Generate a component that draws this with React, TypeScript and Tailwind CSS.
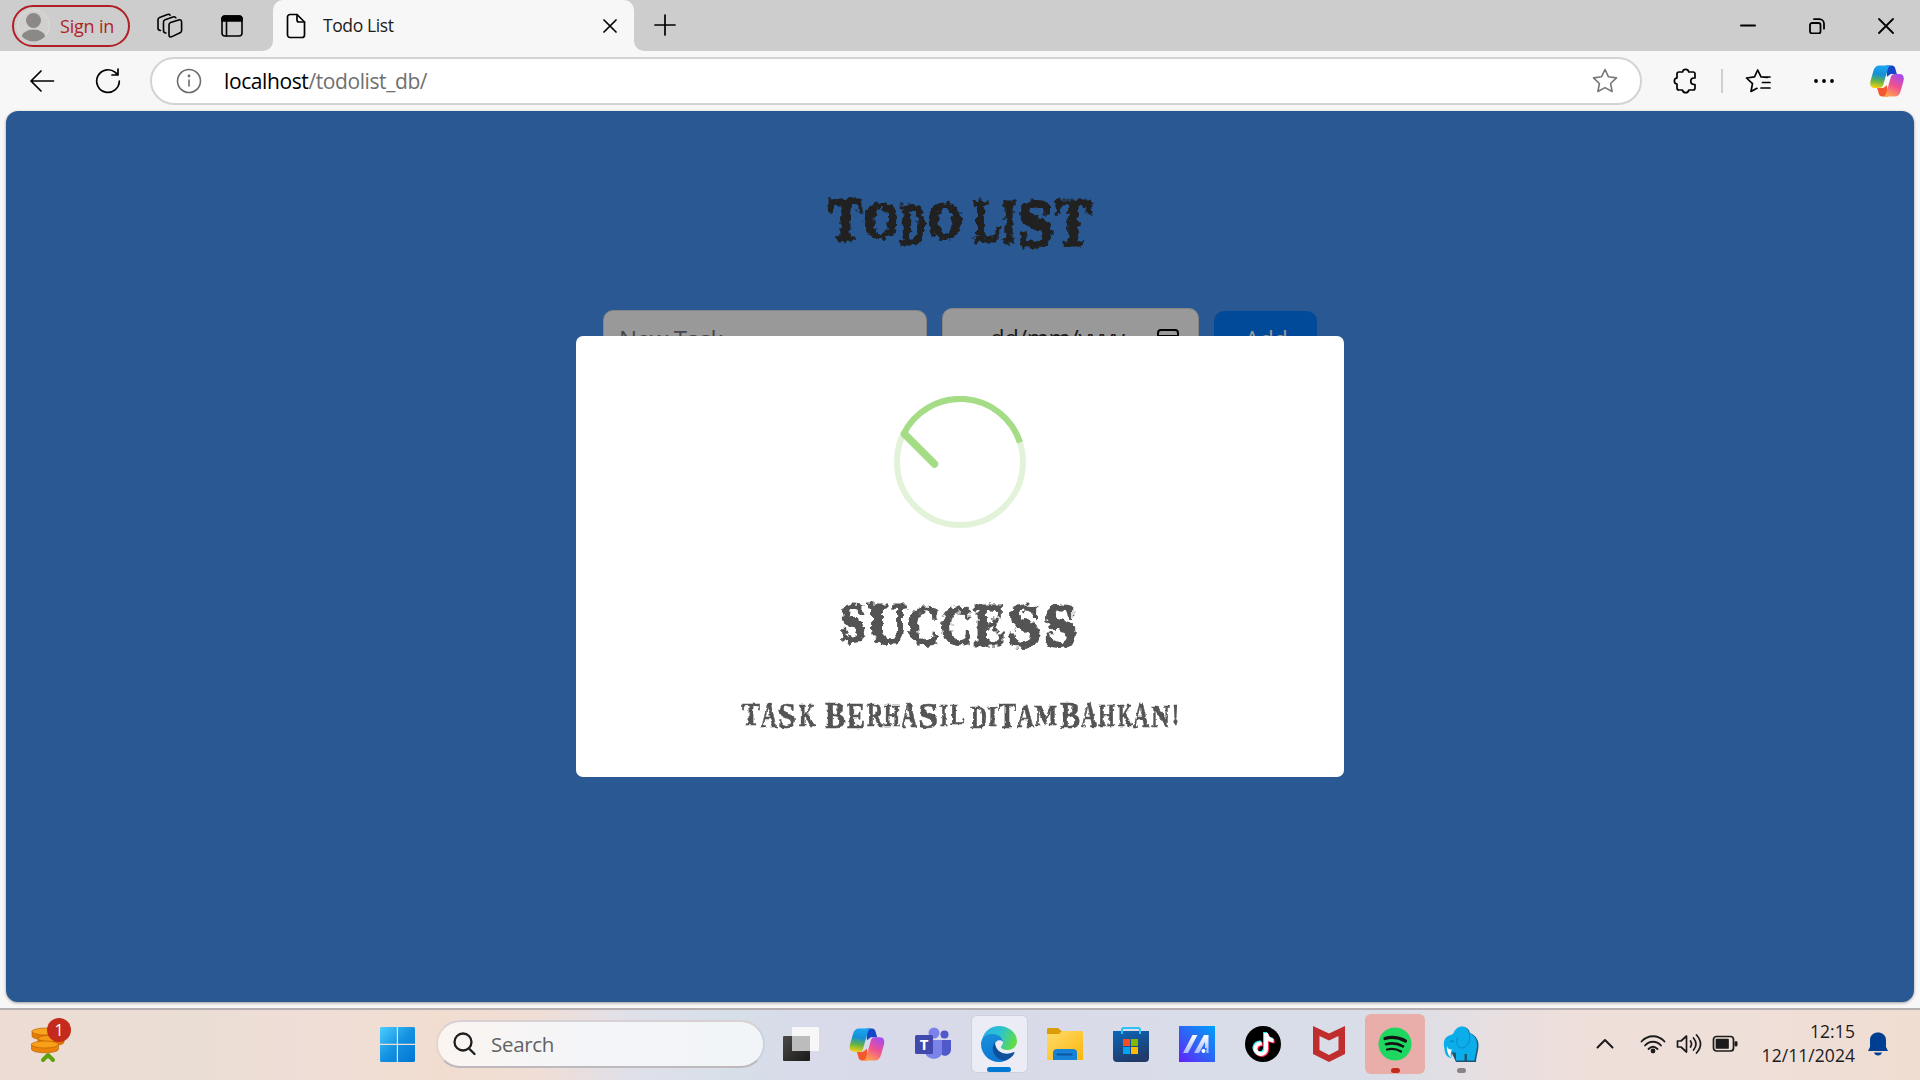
import React from "react";
import { FaTiktok } from "react-icons/fa";

type Glyph = [string, number, number, number, number];

const TITLE: Glyph[] = [
  ["T", 829, 862, 200, 240], ["O", 864, 898, 204, 237], ["D", 900, 926, 206, 244], ["O", 928, 962, 204, 237],
  [" ", 963, 973, 203, 237],
  ["L", 974, 1000, 202, 241], ["I", 1002, 1016, 202, 242], ["S", 1018, 1053, 202, 246], ["T", 1056, 1091, 200, 245],
];
const SUCCESS: Glyph[] = [
  ["S", 841, 865, 605, 641], ["U", 868, 907, 605, 643], ["C", 908, 939, 608, 644], ["C", 941, 972, 608, 644],
  ["E", 974, 1005, 606, 645], ["S", 1008, 1041, 605, 646], ["S", 1044, 1077, 605, 646],
];
const MESSAGE: Glyph[] = [
  ["T", 742, 760, 704, 725], ["A", 761, 777, 704, 727], ["S", 778, 796, 704, 728], ["K", 799, 815, 705, 726],
  [" ", 815, 825, 705, 726],
  ["B", 825, 845, 703, 728], ["E", 847, 865, 705, 728], ["R", 867, 883, 704, 726], ["H", 884, 900, 705, 726],
  ["A", 901, 917, 704, 727], ["S", 918, 938, 704, 728], ["I", 940, 948, 705, 726], ["L", 950, 965, 705, 724],
  [" ", 965, 971, 705, 726],
  ["D", 971, 987, 707, 728], ["I", 988, 997, 706, 726], ["T", 998, 1016, 704, 728], ["A", 1017, 1034, 705, 727],
  ["M", 1035, 1057, 706, 725], ["B", 1060, 1080, 703, 728], ["A", 1081, 1097, 704, 727], ["H", 1098, 1115, 705, 726],
  ["K", 1118, 1132, 705, 726], ["A", 1133, 1149, 704, 727], ["N", 1151, 1170, 706, 727], ["!", 1172, 1179, 705, 724],
];

function Spooky({ glyphs, view, id, spike, stroke, className }: { glyphs: Glyph[]; view: [number, number, number, number]; id: string; spike: number; stroke: number; className: string }) {
  return (
    <svg width={view[2]} height={view[3]} viewBox={view.join(" ")} className={className} overflow="visible">
      <filter id={id} x="-5%" y="-20%" width="110%" height="140%" colorInterpolationFilters="sRGB">
        <feTurbulence type="fractalNoise" baseFrequency="0.23" numOctaves="1" seed="7" result="n" />
        <feDisplacementMap in="SourceGraphic" in2="n" scale={spike} xChannelSelector="R" yChannelSelector="G" />
      </filter>
      <text filter={`url(#${id})`} fill="currentColor" stroke="currentColor" strokeWidth={stroke} fontFamily="Liberation Serif, serif" fontWeight="700" xmlSpace="preserve">
        {glyphs.map(([c, x0, x1, y0, y1], i) => (
          <tspan key={i} x={x0} y={y1} fontSize={(y1 - y0) / 0.66} textLength={x1 - x0} lengthAdjust="spacingAndGlyphs">{c}</tspan>
        ))}
      </text>
    </svg>
  );
}

function Copilot({ id, className }: { id: string; className: string }) {
  return (
    <svg viewBox="0 0 36 34" className={className}>
      <defs>
        <linearGradient id={id + "a"} x1="0.5" y1="0" x2="0.35" y2="1"><stop offset="0" stopColor="#1ba5f0" /><stop offset=".4" stopColor="#1590d8" /><stop offset=".7" stopColor="#63b346" /><stop offset="1" stopColor="#f6cf11" /></linearGradient>
        <linearGradient id={id + "b"} x1="0.8" y1="0" x2="0.3" y2="1"><stop offset="0" stopColor="#a24bf2" /><stop offset=".5" stopColor="#ee5093" /><stop offset="1" stopColor="#ffa34b" /></linearGradient>
      </defs>
      <path d="M17 .5h6c2.500 0 3.500 1.500 4 4l1.500 5H22l-4 3z" fill="#1646c8" />
      <path d="M19 33.500h-6c-2.500 0-3.500-1.500-4-4l-1.500-5H14l4-3z" fill="#f4582e" />
      <path d="M10 .5h13c-2.500 0-3.500 1.500-4.200 4L14 21c-.8 2.500-2 3.500-4.500 3.500H5c-4.500 0-5.500-3.500-4.500-7.500L3.500 6.500C4.500 2.500 6.500.5 10 .5z" fill={`url(#${id}a)`} />
      <path d="M26 33.500H13c2.500 0 3.500-1.500 4.200-4L22 13c.8-2.500 2-3.500 4.500-3.500H31c4.500 0 5.500 3.500 4.500 7.500l-3 10.500c-1 4-3 6-6.500 6z" fill={`url(#${id}b)`} />
    </svg>
  );
}

const line = { fill: "none", stroke: "currentColor", strokeLinecap: "round", strokeLinejoin: "round" } as const;

function TabStrip() {
  return (
    <div className="flex h-[51px] items-end bg-[#cdcdcd]">
      <div className="flex h-[51px] w-[273px] items-center">
        <div className="ml-3 flex h-[42px] w-[118px] items-center rounded-full border-2 border-[#b11f24] pl-[3px]">
          <svg width="33" height="33" viewBox="0 0 33 33">
            <clipPath id="avatar"><circle cx="16.500" cy="16.500" r="16" /></clipPath>
            <circle cx="16.500" cy="16.500" r="16" fill="#d2d0ce" stroke="#dedcda" />
            <g clipPath="url(#avatar)" fill="#8c8886"><circle cx="16.500" cy="11.500" r="7.500" /><ellipse cx="16.500" cy="29" rx="12" ry="8.500" /></g>
          </svg>
          <span className="ml-2.5 whitespace-nowrap text-[18px] leading-none tracking-[-0.2px] text-[#b11f24]">Sign in</span>
        </div>
        <svg width="26" height="26" viewBox="0 0 26 26" className="ml-[27px]" {...line} strokeWidth="1.600">
          <path d="M13.600 9.600 21.600 7q3-.8 3 2v8.500q0 1.600-1.500 2.300L15 23.600q-3 1.200-3-1.600V12q0-1.800 1.600-2.400z" />
          <path d="M9 20q-2.500 0-2.500-2.500V9q0-1.700 1.600-2.300L16 4q2.300-.6 2.800.8" />
          <path d="M3.500 17.500Q1 17.500 1 15V6.600Q1 5 2.600 4.400L10.500 1.500q2-.6 2.500.6" />
        </svg>
        <svg width="22" height="22" viewBox="0 0 22 22" className="ml-[38px]" {...line} strokeWidth="1.600">
          <rect x="1" y="1" width="20" height="20" rx="3" /><path d="M1 6V4a3 3 0 0 1 3-3h14a3 3 0 0 1 3 3v2z" fill="currentColor" /><path d="M5.500 6v15" />
        </svg>
      </div>
      <div className="relative flex h-[51px] w-[361px] items-center rounded-t-[10px] bg-[#f7f7f7] pl-[13px]">
        <svg width="10" height="10" className="absolute -left-[10px] bottom-0"><path d="M10 0v10H0A10 10 0 0 0 10 0" fill="#f7f7f7" /></svg>
        <svg width="10" height="10" className="absolute -right-[10px] bottom-0"><path d="M0 0v10h10A10 10 0 0 1 0 0" fill="#f7f7f7" /></svg>
        <svg width="20" height="26" viewBox="0 0 20 26" {...line} strokeWidth="1.700"><path d="M4 1.500h7l7.500 7.500v13a2.500 2.500 0 0 1-2.500 2.500H4A2.500 2.500 0 0 1 1.500 22V4A2.500 2.500 0 0 1 4 1.500z" /><path d="M11 1.500V7a2 2 0 0 0 2 2h5.500" /></svg>
        <span className="ml-[17px] w-[200px] text-[17.500px] tracking-[-0.4px] text-[#1b1b1b]">Todo List</span>
        <svg width="14" height="14" viewBox="0 0 14 14" className="ml-[80px]" {...line} strokeWidth="1.700"><path d="M1 1l12 12M13 1 1 13" /></svg>
      </div>
      <svg width="22" height="22" viewBox="0 0 22 22" className="mb-[15px] ml-5" {...line} strokeWidth="1.700"><path d="M11 1v20M1 11h20" /></svg>
      <div className="ml-auto flex h-[51px] items-center pr-[26px]">
        <svg width="16" height="16" viewBox="0 0 16 16" {...line} strokeWidth="2"><path d="M1 7.500h14" /></svg>
        <svg width="16" height="16" viewBox="0 0 16 16" className="ml-[53px]" {...line} strokeWidth="1.800"><rect x="1" y="5" width="10.500" height="10.500" rx="2" /><path d="M5 1.200h5.500a4.500 4.500 0 0 1 4.500 4.500v5" /></svg>
        <svg width="16" height="16" viewBox="0 0 16 16" className="ml-[53px]" {...line} strokeWidth="1.800"><path d="M1 1l14 14M15 1 1 15" /></svg>
      </div>
    </div>
  );
}

function Toolbar() {
  return (
    <div className="flex h-[60px] items-center bg-[#f7f7f7]">
      <svg width="26" height="24" viewBox="0 0 26 24" className="-mt-px ml-[29px]" {...line} strokeWidth="1.700"><path d="M12 2 2 12l10 10M2 12h22.500" /></svg>
      <svg width="26" height="26" viewBox="0 0 26 26" className="ml-10" {...line} strokeWidth="1.700"><path d="M24.300 13A11.300 11.300 0 1 1 20 4.200L22.500 6.500M23 1v6h-6" /></svg>
      <div className="ml-[29px] flex h-12 w-[1492px] items-center rounded-full border-2 border-[#d3d3d3] bg-white pl-6">
        <svg width="26" height="26" viewBox="0 0 26 26" className="text-[#6c6c6c]" {...line} strokeWidth="1.600"><circle cx="13" cy="13" r="11.500" /><path d="M13 12v6" /><circle cx="13" cy="8" r=".6" /></svg>
        <span className="ml-[22px] mt-[2px] w-[600px] text-[21px] tracking-[-0.4px] text-[#707070]"><span className="text-black">localhost</span>/todolist_db/</span>
        <svg width="26" height="26" viewBox="0 0 26 26" className="ml-auto mr-[22px] text-[#777]" {...line} strokeWidth="1.600"><path d="M13 1.500l3.500 7.300 8 1.100-5.900 5.600 1.500 8-7.100-3.900-7.100 3.900 1.500-8-5.900-5.600 8-1.100z" /></svg>
      </div>
      <svg width="24" height="26" viewBox="0 0 24 26" className="ml-[31px]" {...line} strokeWidth="1.700"><path d="M4 6a2 2 0 0 1 2-2h3.500a3.200 3.200 0 0 1 6.300 0H20a2 2 0 0 1 2 2v4h-1a3.200 3.200 0 0 0 0 6.500h1V20a2 2 0 0 1-2 2h-4.200a3.200 3.200 0 0 1-6.300 0H6a2 2 0 0 1-2-2v-3.800a3.200 3.200 0 0 1 0-6.300z" /></svg>
      <div className="ml-[24px] h-6 w-0.5 bg-[#cfcfcf]" />
      <svg width="26" height="26" viewBox="0 0 26 26" className="ml-[22px]" {...line} strokeWidth="1.700"><path d="M22.500 9.500 16 8.800 12.700 2 9.500 8.800 1.500 10l6 5.600L6 23.500l6-3.200M17 9h8M17.500 14.500H25M16 20h9" /></svg>
      <svg width="20" height="6" viewBox="0 0 20 6" className="ml-[43px]"><circle cx="2" cy="3" r="1.900" /><circle cx="10" cy="3" r="1.900" /><circle cx="18" cy="3" r="1.900" /></svg>
      <Copilot id="c1" className="ml-[36px] h-[32px] w-[34px]" />
    </div>
  );
}

function Page() {
  return (
    <div className="relative flex h-[891px] flex-col items-center overflow-hidden rounded-xl bg-[#295892] shadow-[0_1px_3px_#999]">
      <h1 className="mt-[79px]"><Spooky id="sp1" glyphs={TITLE} view={[820, 190, 280, 65]} spike={9} stroke={3} className="text-[#212121]" /></h1>
      <div className="mt-[53px] flex h-[60px] items-start gap-[15px] text-2xl">
        <div className="mt-[2px] h-[56px] w-[324px] rounded-[10px] border border-[#858585] bg-[#999] pl-[15px] pt-[10px] leading-[36px] tracking-[-0.4px] text-[#45484b]">New Task</div>
        <div className="flex h-[60px] w-[257px] justify-between rounded-[10px] border border-[#858585] bg-[#999] pl-[47px] pr-[19px] pt-[11px] leading-[36px] tracking-[-0.5px] text-[#1b1b1b]">
          dd/mm/yyyy
          <svg width="22" height="22" viewBox="0 0 22 22" className="mt-[9px] text-black" {...line} strokeWidth="2"><rect x="1" y="1" width="20" height="20" rx="3" /><path d="M1 7h20" /></svg>
        </div>
        <div className="mt-[3px] h-[54px] w-[103px] rounded-[10px] bg-[#004a99] pl-px pt-[10px] text-center leading-[36px] tracking-[-0.5px] text-[#999]">Add</div>
      </div>
      <div className="absolute left-[570px] top-[225px] flex h-[441px] w-[768px] flex-col items-center rounded-[7px] bg-white text-[#545454]">
        <svg width="132" height="132" viewBox="894 396 132 132" className="mt-[60px]" fill="none">
          <circle cx="960" cy="462" r="63" stroke="#e2f3da" strokeWidth="6" />
          <path d="M903.500 434.200A63 63 0 0 1 1020 442.500" stroke="#a5dc86" strokeWidth="6" />
          <path d="M904.500 434 934.500 464" stroke="#a5dc86" strokeWidth="7.500" strokeLinecap="round" />
        </svg>
        <h2 className="mt-[67px]"><Spooky id="sp2" glyphs={SUCCESS} view={[835, 595, 250, 60]} spike={9} stroke={2.8} className="" /></h2>
        <div className="mt-[40px]"><Spooky id="sp3" glyphs={MESSAGE} view={[735, 695, 450, 40]} spike={3.5} stroke={0.6} className="" /></div>
      </div>
    </div>
  );
}

function Cell({ children, className = "", mark = "" }: { children: React.ReactNode; className?: string; mark?: string }) {
  return (
    <div className="flex w-[66px] items-center justify-center">
      <div className={"relative flex items-center justify-center " + (className || "h-[60px] w-[60px]")}>
        {children}
        {mark && <span className={"absolute h-[5px] rounded-full " + mark} />}
      </div>
    </div>
  );
}

function Taskbar() {
  return (
    <div className="flex h-[72px] items-center border-t-2 border-[#b5afb2] bg-[linear-gradient(90deg,#ecdcd4_0%,#eaddd4_10%,#efddd7_16%,#f1ddd0_23%,#f0ddd5_28%,#dfe0ea_33%,#d6dfe8_38%,#d9daea_43%,#d9dae8_52%,#d9dde9_62%,#d8dde8_72%,#e6dfe2_77%,#eedfda_82%,#efdfd9_91%,#efddd1_100%)] pb-[2px]">
      <div className="w-[380px]">
        <div className="relative -mt-2 ml-[31px] h-[44px] w-[40px]">
          <svg width="40" height="46" viewBox="0 0 40 46">
            <g stroke="#b95a00" strokeWidth=".6">
              <path d="M1 13v5c0 5 27 5 27 0v-5z" fill="#e37b05" /><ellipse cx="14.500" cy="13.500" rx="13.500" ry="3.500" fill="#f9a51d" />
              <path d="M7 20v4c0 5 26 5 26 0v-4z" fill="#df7303" /><ellipse cx="20" cy="20.500" rx="13" ry="3.300" fill="#f59813" />
              <path d="M.5 26v5c0 5 27 5 27 0v-5z" fill="#ea8307" /><ellipse cx="14" cy="26.500" rx="13.500" ry="3.500" fill="#f9a01a" />
            </g>
            <path d="M12 42l5-5 5 5" fill="none" stroke="#5fa10d" strokeWidth="4" strokeLinecap="round" strokeLinejoin="round" />
          </svg>
          <div className="absolute left-[16px] top-0 flex h-6 w-6 items-center justify-center rounded-full bg-[#c42b1c] text-[16px] text-white">1</div>
        </div>
      </div>
      <svg width="35" height="35" viewBox="0 0 35 35">
        <linearGradient id="win" gradientUnits="userSpaceOnUse" x1="0" y1="0" x2="35" y2="35"><stop stopColor="#4ccdff" /><stop offset=".5" stopColor="#1492e2" /><stop offset="1" stopColor="#0275d3" /></linearGradient>
        <path d="M1 0h15.800v16.800H0V1zM18 0h16l1 1v15.800H18zM0 18h16.800v17H1l-1-1zM18 18h17v16l-1 1H18z" fill="url(#win)" />
      </svg>
      <div className="ml-[21px] flex h-[48px] w-[329px] items-center rounded-full border-2 border-b-[#bdb9bc] border-l-[#e2d5cf] border-r-[#cbd2dd] border-t-[#d8d1d4] bg-[linear-gradient(90deg,#fbf5f1,#f3f5f9_50%,#f2f5f8)] pl-[15px]">
        <svg width="23" height="24" viewBox="0 0 23 24" className="text-[#1f1f1f]" {...line} strokeWidth="2.300"><circle cx="10" cy="10" r="8.500" /><path d="M16 16.500l5.500 5.500" /></svg>
        <span className="ml-[15px] text-[20.500px] tracking-[-0.3px] text-[#626262]">Search</span>
      </div>
      <div className="ml-[3px] flex h-[60px]">
        <Cell><svg width="36" height="36" viewBox="0 0 36 36"><linearGradient id="tv" x2="1" y2="1"><stop stopColor="#4c4a48" /><stop offset="1" stopColor="#191919" /></linearGradient><rect y="10" width="27" height="25" rx="1" fill="url(#tv)" /><rect x="9" y="1" width="27" height="24" rx="1" fill="#f7f7f7" /><path d="M9 10h18v15H9z" fill="#bcbcbc" /></svg></Cell>
        <Cell><Copilot id="c2" className="h-[33px] w-[36px]" /></Cell>
        <Cell>
          <svg width="36" height="36" viewBox="0 0 36 36"><circle cx="29.500" cy="8.500" r="4" fill="#5059c9" /><path d="M24 14h12v9c0 9-12 9-12 0z" fill="#5059c9" /><circle cx="19" cy="7" r="5.500" fill="#7b83eb" /><path d="M11 14h16v12c0 9-16 9-17 0z" fill="#7b83eb" /><rect y="9" width="18" height="19" rx="1.500" fill="#4249ad" /><text x="9" y="24" textAnchor="middle" fontFamily="Open Sans, sans-serif" fontWeight="700" fontSize="15" fill="#fff">T</text></svg>
        </Cell>
        <Cell className="h-[58px] w-[57px] rounded-md border border-[#cfd0dc] bg-[#ebecf5]" mark="bottom-0 w-6 bg-[#0078d4]">
          <svg width="36" height="36" viewBox="0 0 36 36">
            <linearGradient id="ea" x1="0" y1=".2" x2="1" y2=".5"><stop stopColor="#2aaee8" /><stop offset=".5" stopColor="#2bc4cf" /><stop offset="1" stopColor="#61dc44" /></linearGradient>
            <linearGradient id="eb" x1="0" y1="0" x2=".3" y2="1"><stop stopColor="#1a90dc" /><stop offset="1" stopColor="#0c78d2" /></linearGradient>
            <path d="M1 14C3 5 10 0 18 0c10 0 18 7 18 15 0 5-4 9-9 9-4 0-7-1-7-3 0-1 2-2 2-5 0-4-4-7-9-7-6 0-10 3-12 6z" fill="url(#ea)" />
            <path d="M0 18c0-6 5-10 11-10 7 0 11 4 11 8-2-3-8-2-9 4-1 7 5 14 12 14.500C22 36 20 36 18 36 8 36 0 28 0 18z" fill="url(#eb)" />
            <path d="M14 16c-6 8 1 19 11 18.500 4-1.500 7-4.500 8.500-7.500.5-1-.5-1-1-.7C24 30 14 26 14 16z" fill="#104f9b" />
          </svg>
        </Cell>
        <Cell>
          <svg width="36" height="36" viewBox="0 0 36 36"><linearGradient id="fo" x2="1" y2="1"><stop stopColor="#ffdc6b" /><stop offset="1" stopColor="#fbb60d" /></linearGradient><path d="M0 3.500C0 2.500.5 2 1.500 2H11l4 3.500V9H0z" fill="#dc9c06" /><path d="M0 8h12l3-3h19.500c1 0 1.500.5 1.500 1.500V34H0z" fill="url(#fo)" /><path d="M6 34v-7c0-3 1.500-4 4-4h16c2.500 0 4 1 4 4v7z" fill="#1682d5" /><path d="M10.500 28.500h14" stroke="#0c559f" strokeWidth="1.800" strokeLinecap="round" /></svg>
        </Cell>
        <Cell>
          <svg width="36" height="36" viewBox="0 0 36 36"><linearGradient id="st" x2=".4" y2="1"><stop stopColor="#0b68bb" /><stop offset="1" stopColor="#213a69" /></linearGradient><path d="M0 5h36v27a4 4 0 0 1-4 4H4a4 4 0 0 1-4-4z" fill="url(#st)" /><path d="M9 8V3.500Q9 2 10.500 2h15Q27 2 27 3.500V8" fill="none" stroke="#31c0f3" strokeWidth="2" /><path d="M10 13h7v7h-7z" fill="#f25022" /><path d="M18 13h7v7h-7z" fill="#7fba00" /><path d="M10 21h7v7h-7z" fill="#00a4ef" /><path d="M18 21h7v7h-7z" fill="#ffb900" /></svg>
        </Cell>
        <Cell>
          <svg width="36" height="36" viewBox="0 0 36 36"><linearGradient id="as" x1="0" y1="1" x2="1" y2="0"><stop stopColor="#6321fa" /><stop offset=".5" stopColor="#2d66f4" /><stop offset="1" stopColor="#009ffc" /></linearGradient><linearGradient id="asl" x1="0" y1="0" x2="0" y2="1"><stop stopColor="#fff" /><stop offset="1" stopColor="#a9b8fa" /></linearGradient><path d="M0 0h36v36H0z" fill="url(#as)" /><path d="M13.500 9h5L9 27H4zM25 9h4.500v13H26v-6l-6 11h-5z" fill="url(#asl)" /><circle cx="24.500" cy="25" r="2" fill="#fff" /><path d="M27.500 22h2v5h-2z" fill="#a8c6ff" /></svg>
        </Cell>
        <Cell>
          <div className="relative h-9 w-9 rounded-full bg-black">
            <FaTiktok size={23} className="absolute left-[6px] top-[6px] text-[#25f4ee]" /><FaTiktok size={23} className="absolute left-[8px] top-[8px] text-[#fe2c55]" /><FaTiktok size={23} className="absolute left-[7px] top-[7px] text-white" />
          </div>
        </Cell>
        <Cell><svg width="32" height="36" viewBox="0 0 32 36"><path d="M0 0l16 7.500L32 0v28l-16 8L0 28zM6.500 10v14L16 29l9.500-5V10L16 14.500z" fill="#bf2d2d" fillRule="evenodd" /></svg></Cell>
        <Cell className="h-[60px] w-[60px] rounded-md bg-[#e9aeaa]" mark="bottom-[1px] w-[9px] bg-[#c42b1c]">
          <svg width="34" height="34" viewBox="0 0 34 34" fill="none" stroke="#131313" strokeLinecap="round"><circle cx="17" cy="17" r="16.500" fill="#1ed760" stroke="none" /><path d="M7 11.500c7-2 14-1 20.500 2.500" strokeWidth="3.200" /><path d="M8 17.200c6-1.600 12-.8 17 2.200" strokeWidth="2.700" /><path d="M9 22.500c5-1.300 10-.5 14 2" strokeWidth="2.200" /></svg>
        </Cell>
        <Cell mark="bottom-[1px] w-[9px] bg-[#858589]">
          <svg width="36" height="36" viewBox="0 0 36 36">
            <path d="M10 8C12 3 15 .5 19 .5c4 0 6 2.500 7 6 6 2 9 8 8.500 13.500-.5 6-2 9-2.500 15.500H12L8 27 4.500 28C0 22 0 13 5 10z" fill="#1e5674" transform="translate(1 .5)" />
            <path d="M10 8C12 3 15 .5 19 .5c4 0 6 2.500 7 6 5.500 2 8.500 8 8 13.500-.5 6-2 9-2.500 14.500h-7.500V28h-2.500v6.500h-8.500V27L9.500 26 8 32C3 31 2 27 1.500 23 0 17 1 12 5 10z" fill="#0badea" />
            <path d="M26 7c2 7-1 14.500-7 15-5 0-6-6-4.500-11" fill="none" stroke="#078ac4" />
            <path d="M11 16q-2-3-4 0" fill="none" stroke="#077caf" />
            <path d="M4 20c.5 2.500 2 4 5 3.500l-1 2-.5 6C5 29 3.500 24 4 20z" fill="#fff" />
          </svg>
        </Cell>
      </div>
      <div className="ml-auto flex items-center pr-8 text-[#1b1b1b]">
        <svg width="18" height="11" viewBox="0 0 18 11" className="-mt-px" {...line} strokeWidth="2"><path d="M1.500 9.500 9 2l7.500 7.500" /></svg>
        <svg width="26" height="20" viewBox="0 0 26 20" className="-mt-px ml-[26px]" {...line} strokeWidth="1.800"><path d="M1.500 7.500c6.500-7 16.500-7 23 0M5 11.500c4.500-5 11.500-5 16 0M8.500 15c3-3 6-3 9 0" /><circle cx="13" cy="17" r="1.500" fill="currentColor" /></svg>
        <svg width="26" height="22" viewBox="0 0 26 22" className="ml-[10px]" {...line} strokeWidth="1.700"><path d="M1.500 8v6H5l5.500 5V3L5 8zM14.500 8q2 3 0 6M17.500 5q5 6 0 12M20.500 2q8 9 0 18" /></svg>
        <svg width="26" height="18" viewBox="0 0 26 18" className="ml-[10px]" {...line} strokeWidth="1.700"><rect x="1.500" y="1.500" width="20" height="14.500" rx="3" /><path d="M4.500 4.500h11.500v8.500H4.500z" fill="currentColor" /><path d="M24 7.500v2.500" strokeWidth="3" /></svg>
        <div className="-mt-[2px] ml-[15px] w-[102px] whitespace-nowrap text-right text-[17.500px] leading-6 tracking-[0.05px]"><div className="tracking-[0.1px]">12:15</div><div className="-ml-4">12/11/2024</div></div>
        <svg width="20" height="24" viewBox="0 0 20 24" className="ml-[13px] text-[#003e92]"><path d="M0 19l2-4V8c0-10 16-10 16 0v7l2 4zM6 20.500h8q-1 3-4 3t-4-3z" fill="currentColor" /></svg>
      </div>
    </div>
  );
}

export default function App() {
  return (
    <div className="flex h-[1080px] w-[1920px] flex-col overflow-hidden bg-[#f7f7f7] font-['Open_Sans',sans-serif] text-black [&_svg]:shrink-0">
      <TabStrip />
      <Toolbar />
      <div className="h-[897px] px-[6px]"><Page /></div>
      <Taskbar />
    </div>
  );
}
